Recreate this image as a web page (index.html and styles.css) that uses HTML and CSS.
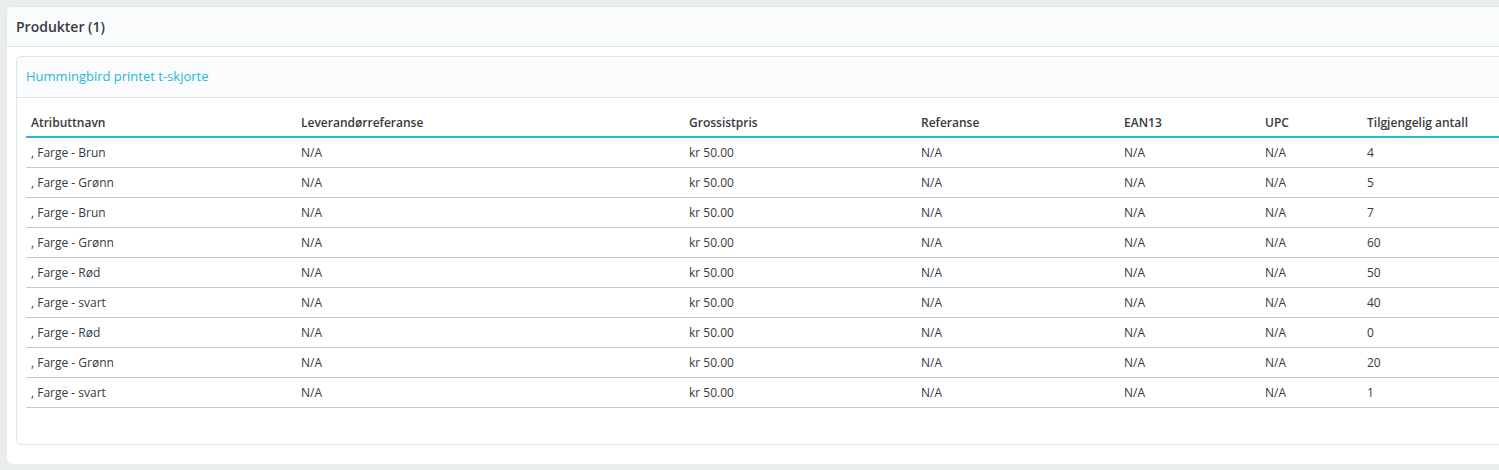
FILE: index.html
```html
<!DOCTYPE html>
<html lang="no">
<head>
<meta charset="utf-8">
<title>Produkter</title>
<link rel="stylesheet" href="styles.css">
</head>
<body>
<div class="panel">
  <div class="panel-heading">Produkter (1)</div>
  <div class="panel-body">
    <div class="subpanel">
      <div class="subpanel-heading">Hummingbird printet t-skjorte</div>
      <div class="subpanel-body">
        <table class="table">
          <colgroup>
            <col class="c1"><col class="c2"><col class="c3"><col class="c4"><col class="c5"><col class="c6"><col class="c7">
          </colgroup>
          <thead>
            <tr><th>Atributtnavn</th><th>Leverandørreferanse</th><th>Grossistpris</th><th>Referanse</th><th>EAN13</th><th>UPC</th><th>Tilgjengelig antall</th></tr>
          </thead>
          <tbody>
            <tr><td>, Farge - Brun</td><td>N/A</td><td>kr 50.00</td><td>N/A</td><td>N/A</td><td>N/A</td><td>4</td></tr>
            <tr><td>, Farge - Grønn</td><td>N/A</td><td>kr 50.00</td><td>N/A</td><td>N/A</td><td>N/A</td><td>5</td></tr>
            <tr><td>, Farge - Brun</td><td>N/A</td><td>kr 50.00</td><td>N/A</td><td>N/A</td><td>N/A</td><td>7</td></tr>
            <tr><td>, Farge - Grønn</td><td>N/A</td><td>kr 50.00</td><td>N/A</td><td>N/A</td><td>N/A</td><td>60</td></tr>
            <tr><td>, Farge - Rød</td><td>N/A</td><td>kr 50.00</td><td>N/A</td><td>N/A</td><td>N/A</td><td>50</td></tr>
            <tr><td>, Farge - svart</td><td>N/A</td><td>kr 50.00</td><td>N/A</td><td>N/A</td><td>N/A</td><td>40</td></tr>
            <tr><td>, Farge - Rød</td><td>N/A</td><td>kr 50.00</td><td>N/A</td><td>N/A</td><td>N/A</td><td>0</td></tr>
            <tr><td>, Farge - Grønn</td><td>N/A</td><td>kr 50.00</td><td>N/A</td><td>N/A</td><td>N/A</td><td>20</td></tr>
            <tr><td>, Farge - svart</td><td>N/A</td><td>kr 50.00</td><td>N/A</td><td>N/A</td><td>N/A</td><td>1</td></tr>
          </tbody>
        </table>
      </div>
    </div>
  </div>
</div>
</body>
</html>
```

FILE: styles.css
```css
html, body {
  margin: 0;
  padding: 0;
  overflow: hidden;
}
body {
  background: #eaedee;
  font-family: "Open Sans", "Noto Sans", sans-serif;
  color: #363a41;
  font-size: 12px;
  padding: 7px 0 0 7px;
}
.panel {
  width: 1560px;
  background: #fff;
  border-radius: 5px;
  box-shadow: 0 0 2px rgba(0,0,0,0.06);
}
.panel-heading {
  height: 39px;
  line-height: 40px;
  padding-left: 9px;
  font-size: 14px;
  font-weight: 600;
  background: #fafbfc;
  border-bottom: 1px solid #dbe6e9;
  border-radius: 5px 5px 0 0;
}
.panel-body {
  padding: 9px 0 19px 9px;
}
.subpanel {
  border: 1px solid #dbe6e9;
  border-radius: 5px;
  background: #fff;
}
.subpanel-heading {
  height: 40px;
  line-height: 38px;
  padding-left: 9px;
  font-size: 13px;
  color: #25b9d7;
  background: #fafbfc;
  border-bottom: 1px solid #dbe6e9;
  border-radius: 5px 5px 0 0;
}
.subpanel-body {
  padding: 10px 0 36px 9px;
}
.table {
  border-collapse: collapse;
  table-layout: fixed;
  width: 1560px;
}
.c1 { width: 270px; }
.c2 { width: 388px; }
.c3 { width: 232px; }
.c4 { width: 203px; }
.c5 { width: 141px; }
.c6 { width: 102px; }
.c7 { width: 224px; }
.table th {
  text-align: left;
  font-weight: 600;
  font-size: 12px;
  height: 28px;
  padding: 0 5px;
  border-bottom: 2px solid #25b9d7;
  color: #363a41;
}
.table td {
  height: 29px;
  padding: 0 5px;
  border-bottom: 1px solid #bbcdd2;
  font-size: 12px;
}
```
